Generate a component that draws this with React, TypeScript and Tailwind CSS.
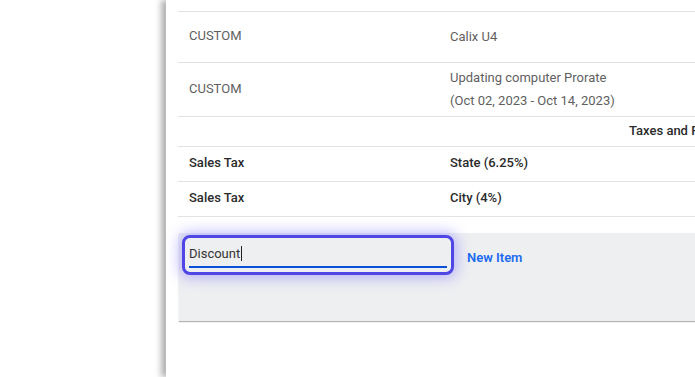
import React from 'react';

const rows = [
  { a: 'CUSTOM', b: ['Calix U4'], h: 'h-[51px]' },
  { a: 'CUSTOM', b: ['Updating computer Prorate', '(Oct 02, 2023 - Oct 14, 2023)'], h: 'h-[54px]' },
];

export default function App() {
  return (
    <div className="flex h-[377px] w-[695px] overflow-hidden bg-white font-['Roboto',sans-serif] text-[13px]">
      <div className="w-[166px] shrink-0 bg-white" />
      <div className="relative flex-1 overflow-hidden bg-white pl-3 shadow-[-5px_0_6px_rgba(0,0,0,0.3)]">
        <div className="w-[700px]">
          {/* previous row, cut off */}
          <div className="h-[12px] border-b border-[#e3e3e3]" />

          {rows.map((r, i) => (
            <div key={i} className={`flex ${r.h} items-center border-b border-[#e3e3e3] pb-[2px] text-[#5f5f5f]`}>
              <div className="w-[261px] pl-[11px]">{r.a}</div>
              <div className="pl-[11px] leading-[23px]">
                {r.b.map((t) => (
                  <div key={t}>{t}</div>
                ))}
              </div>
            </div>
          ))}

          <div className="flex h-[30px] items-center border-b border-[#e3e3e3] pb-[2px] font-medium text-[#2b2b2b]">
            <div className="w-[261px]" />
            <div className="w-[179px]" />
            <div className="pl-[11px]">Taxes and Fees</div>
          </div>

          {[
            ['Sales Tax', 'State (6.25%)'],
            ['Sales Tax', 'City (4%)'],
          ].map(([a, b], i) => (
            <div key={i} className="flex h-[35px] items-center border-b border-[#e3e3e3] pb-[2px] font-medium text-[#2b2b2b]">
              <div className="w-[261px] pl-[11px]">{a}</div>
              <div className="pl-[11px]">{b}</div>
            </div>
          ))}

          <div className="mt-[16px] ml-px h-[88px] bg-[#eeeff1] pt-[2px] pl-[3px] shadow-[0_1px_1px_rgba(0,0,0,0.3)]">
            <div className="flex items-start">
              <div className="relative h-[40px] w-[272px] rounded-[8px] border-[3px] border-[#4f46e5] bg-[#eeeff1] shadow-[0_0_14px_3px_rgba(99,91,255,0.4)]">
                <div className="absolute left-[4px] top-[6px] flex items-center text-[#333]">
                  Discount
                  <span className="ml-px inline-block h-[15px] w-px bg-[#222]" />
                </div>
                <div className="absolute bottom-[4px] left-[4px] right-[4px] h-[2px] bg-[#0a50d8]" />
              </div>
              <button className="ml-[13px] mt-[13px] font-semibold text-[#1a6bf0]">New Item</button>
            </div>
          </div>
        </div>
      </div>
    </div>
  );
}
